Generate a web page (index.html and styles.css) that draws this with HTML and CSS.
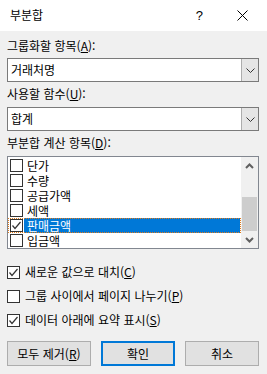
FILE: index.html
```html
<!DOCTYPE html>
<html lang="ko">
<head>
    <meta charset="UTF-8">
    <title>부분합</title>
    <link rel="stylesheet" href="styles.css">
</head>
<body>
    <div class="dialog">
        <div class="titlebar">
            <span class="title">부분합</span>
            <span class="help">?</span>
            <svg class="close" width="11" height="11" viewBox="0 0 11 11">
                <path d="M0.5 0.5 L10.5 10.5 M10.5 0.5 L0.5 10.5" stroke="#000" stroke-width="1" fill="none"/>
            </svg>
        </div>

        <div class="content">
            <label class="field-label first">그룹화할 항목(<u>A</u>):</label>
            <div class="combo">
                <span class="combo-text">거래처명</span>
                <span class="combo-btn">
                    <svg width="9" height="5" viewBox="0 0 9 5"><path d="M0.5 0.5 L4.5 4.5 L8.5 0.5" stroke="#333" fill="none"/></svg>
                </span>
            </div>

            <label class="field-label">사용할 함수(<u>U</u>):</label>
            <div class="combo">
                <span class="combo-text">합계</span>
                <span class="combo-btn">
                    <svg width="9" height="5" viewBox="0 0 9 5"><path d="M0.5 0.5 L4.5 4.5 L8.5 0.5" stroke="#333" fill="none"/></svg>
                </span>
            </div>

            <label class="field-label">부분합 계산 항목(<u>D</u>):</label>
            <div class="listbox">
                <ul class="items">
                    <li class="item"><span class="box"></span><span class="item-text">단가</span></li>
                    <li class="item"><span class="box"></span><span class="item-text">수량</span></li>
                    <li class="item"><span class="box"></span><span class="item-text">공급가액</span></li>
                    <li class="item"><span class="box"></span><span class="item-text">세액</span></li>
                    <li class="item selected">
                        <span class="box">
                            <svg width="11" height="11" viewBox="0 0 11 11"><path d="M1.5 5.5 L4 8.5 L9.5 2" stroke="#333" stroke-width="1.2" fill="none"/></svg>
                        </span>
                        <span class="item-text">판매금액</span>
                    </li>
                    <li class="item"><span class="box"></span><span class="item-text">입금액</span></li>
                </ul>
                <div class="scrollbar">
                    <span class="arrow">
                        <svg width="9" height="6" viewBox="0 0 9 6"><path d="M1 5 L4.5 1.5 L8 5" stroke="#606060" stroke-width="2" fill="none"/></svg>
                    </span>
                    <span class="track"></span>
                    <span class="thumb"></span>
                    <span class="arrow">
                        <svg width="9" height="6" viewBox="0 0 9 6"><path d="M1 1 L4.5 4.5 L8 1" stroke="#606060" stroke-width="2" fill="none"/></svg>
                    </span>
                </div>
            </div>

            <div class="options">
                <div class="option">
                    <span class="box">
                        <svg width="11" height="11" viewBox="0 0 11 11"><path d="M1.5 5.5 L4 8.5 L9.5 2" stroke="#333" stroke-width="1.2" fill="none"/></svg>
                    </span>
                    <span>새로운 값으로 대치(<u>C</u>)</span>
                </div>
                <div class="option">
                    <span class="box"></span>
                    <span>그룹 사이에서 페이지 나누기(<u>P</u>)</span>
                </div>
                <div class="option">
                    <span class="box">
                        <svg width="11" height="11" viewBox="0 0 11 11"><path d="M1.5 5.5 L4 8.5 L9.5 2" stroke="#333" stroke-width="1.2" fill="none"/></svg>
                    </span>
                    <span>데이터 아래에 요약 표시(<u>S</u>)</span>
                </div>
            </div>

            <div class="buttons">
                <button class="btn wide">모두 제거(<u>R</u>)</button>
                <button class="btn default">확인</button>
                <button class="btn">취소</button>
            </div>
        </div>
    </div>
</body>
</html>
```

FILE: styles.css
```css
* {
    margin: 0;
    padding: 0;
    box-sizing: border-box;
}

body {
    background-color: #f0f0f0;
    color: #000;
    font-family: "Noto Sans CJK KR", "Noto Sans", sans-serif;
    font-size: 12px;
    line-height: 16px;
}

.dialog {
    width: 267px;
    height: 374px;
    background: #f0f0f0;
}

.titlebar {
    height: 31px;
    background: #fff;
    display: flex;
    align-items: center;
    padding-left: 10px;
}

.title {
    flex: 1;
    margin-top: -1px;
}

.help {
    font-size: 13px;
    margin-right: 34px;
    font-family: "Liberation Sans", sans-serif;
}

.close {
    margin-right: 19px;
}

.content {
    padding: 7px 8px 0 7px;
}

.field-label {
    display: block;
    height: 16px;
    margin-top: 4px;
    margin-bottom: 5px;
}

.field-label.first {
    margin-top: 0;
    margin-bottom: 4px;
}

.combo {
    display: flex;
    height: 24px;
    background: #fff;
    border: 1px solid #7a7a7a;
}

.combo-text {
    flex: 1;
    padding-left: 3px;
    line-height: 22px;
}

.combo-btn {
    width: 17px;
    background: #e5e5e5;
    border-left: 1px solid #adadad;
    display: flex;
    align-items: center;
    justify-content: center;
}

.listbox {
    display: flex;
    height: 93px;
    background: #fff;
    border: 1px solid #828790;
}

.items {
    flex: 1;
    list-style: none;
    padding-top: 1px;
}

.item {
    display: flex;
    align-items: center;
    height: 15px;
    padding-left: 2px;
}

.item .item-text {
    padding-left: 4px;
    line-height: 15px;
}

.item.selected {
    outline: 1px dotted #e07b1c;
    outline-offset: -1px;
}

.item.selected .item-text {
    flex: 1;
    background: #0078d7;
    color: #fff;
    padding-left: 3px;
    margin-left: 1px;
    margin-right: 1px;
}

.box {
    width: 13px;
    height: 13px;
    border: 1px solid #333;
    background: #fff;
    display: flex;
    align-items: center;
    justify-content: center;
    flex-shrink: 0;
}

.scrollbar {
    width: 17px;
    background: #f0f0f0;
    display: flex;
    flex-direction: column;
}

.arrow {
    height: 17px;
    display: flex;
    align-items: center;
    justify-content: center;
}

.track {
    height: 23px;
}

.thumb {
    height: 34px;
    background: #cdcdcd;
    margin: 0 1px;
}

.options {
    margin-top: 11px;
}

.option {
    display: flex;
    align-items: center;
    height: 24px;
    gap: 5px;
}

.buttons {
    display: flex;
    gap: 10px;
    margin-top: 9px;
}

.btn {
    width: 75px;
    height: 25px;
    background: #e1e1e1;
    border: 1px solid #adadad;
    font-family: inherit;
    font-size: 12px;
    color: #000;
}

.btn.wide {
    width: 85px;
}

.btn.default {
    border: 2px solid #0078d7;
}
```
